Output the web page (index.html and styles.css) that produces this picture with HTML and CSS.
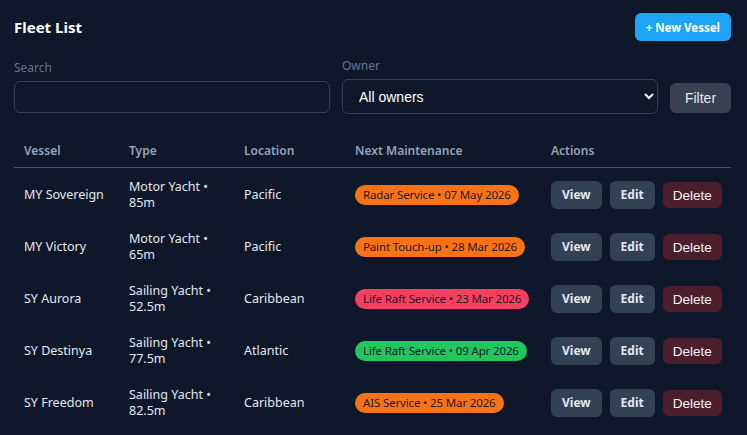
FILE: index.html
```html
<!DOCTYPE html>
<html lang="en">
<head>
  <meta charset="UTF-8" />
  <meta name="viewport" content="width=device-width, initial-scale=1.0" />
  <title>Fleet List</title>
  <link rel="stylesheet" href="styles.css">
</head>
<body>
  <main class="page">
    <header class="page-head">
      <h1>Fleet List</h1>
      <a class="btn-primary" href="#">+ New Vessel</a>
    </header>

    <form class="filters">
      <div class="field">
        <label for="search">Search</label>
        <input type="text" id="search" class="search-input" />
      </div>
      <div class="field">
        <label for="owner" class="owner-label">Owner</label>
        <select id="owner" class="owner-select">
          <option>All owners</option>
        </select>
      </div>
      <button type="submit" class="btn-filter">Filter</button>
    </form>

    <table class="fleet">
      <thead>
        <tr>
          <th class="col-vessel">Vessel</th>
          <th class="col-type">Type</th>
          <th class="col-loc">Location</th>
          <th class="col-maint">Next Maintenance</th>
          <th>Actions</th>
        </tr>
      </thead>
      <tbody>
        <tr>
          <td>MY Sovereign</td>
          <td>Motor Yacht • 85m</td>
          <td>Pacific</td>
          <td><span class="badge badge-orange">Radar Service • 07 May 2026</span></td>
          <td class="actions"><a class="btn-sm" href="#">View</a><a class="btn-sm" href="#">Edit</a><button class="btn-delete">Delete</button></td>
        </tr>
        <tr>
          <td>MY Victory</td>
          <td>Motor Yacht • 65m</td>
          <td>Pacific</td>
          <td><span class="badge badge-orange">Paint Touch-up • 28 Mar 2026</span></td>
          <td class="actions"><a class="btn-sm" href="#">View</a><a class="btn-sm" href="#">Edit</a><button class="btn-delete">Delete</button></td>
        </tr>
        <tr>
          <td>SY Aurora</td>
          <td>Sailing Yacht • 52.5m</td>
          <td>Caribbean</td>
          <td><span class="badge badge-red">Life Raft Service • 23 Mar 2026</span></td>
          <td class="actions"><a class="btn-sm" href="#">View</a><a class="btn-sm" href="#">Edit</a><button class="btn-delete">Delete</button></td>
        </tr>
        <tr>
          <td>SY Destinya</td>
          <td>Sailing Yacht • 77.5m</td>
          <td>Atlantic</td>
          <td><span class="badge badge-green">Life Raft Service • 09 Apr 2026</span></td>
          <td class="actions"><a class="btn-sm" href="#">View</a><a class="btn-sm" href="#">Edit</a><button class="btn-delete">Delete</button></td>
        </tr>
        <tr>
          <td>SY Freedom</td>
          <td>Sailing Yacht • 82.5m</td>
          <td>Caribbean</td>
          <td><span class="badge badge-orange">AIS Service • 25 Mar 2026</span></td>
          <td class="actions"><a class="btn-sm" href="#">View</a><a class="btn-sm" href="#">Edit</a><button class="btn-delete">Delete</button></td>
        </tr>
      </tbody>
    </table>
  </main>
</body>
</html>
```

FILE: styles.css
```css
body {
  margin: 0;
  font-family: "Segoe UI", "Noto Sans", sans-serif;
  background-color: #0f172a;
  color: #e2e8f0;
  font-size: 12.5px;
}

.page {
  padding: 13px 16px 0 14px;
}

.page-head {
  display: flex;
  justify-content: space-between;
  align-items: center;
  height: 28px;
}

.page-head h1 {
  margin: 0;
  font-size: 15px;
  font-weight: 700;
  color: #fff;
}

.btn-primary {
  display: inline-flex;
  align-items: center;
  height: 28px;
  padding: 0 11px;
  background-color: #1ea5f7;
  color: #fff;
  font-size: 11.5px;
  font-weight: 700;
  text-decoration: none;
  border-radius: 6px;
}

.filters {
  display: flex;
  align-items: flex-end;
  gap: 12px;
  margin-top: 17px;
}

.field {
  flex: 1;
  display: flex;
  flex-direction: column;
}

.field label {
  font-size: 12px;
  color: #64748b;
  margin-bottom: 5px;
  line-height: 16px;
}

.search-input {
  height: 32px;
  box-sizing: border-box;
  background-color: #0f172a;
  border: 1px solid #334155;
  border-radius: 6px;
  color: #e2e8f0;
  padding: 0 10px;
  margin-bottom: 1px;
}

.owner-select {
  height: 35px;
  box-sizing: border-box;
  background-color: #0f172a;
  border: 1px solid #334155;
  border-radius: 6px;
  color: #fff;
  padding: 0 12px;
  font-family: "Liberation Sans", Arial, sans-serif;
  font-size: 14px;
  color-scheme: dark;
}

.btn-filter {
  height: 30px;
  width: 61px;
  margin-bottom: 1px;
  background-color: #374151;
  color: #e2e8f0;
  border: none;
  border-radius: 6px;
  font-family: "Liberation Sans", Arial, sans-serif;
  font-size: 14px;
}

.fleet {
  width: 100%;
  margin-top: 17px;
  border-collapse: collapse;
  table-layout: fixed;
}

.fleet th {
  text-align: left;
  font-size: 12px;
  font-weight: 600;
  color: #94a3b8;
  padding: 12px 10px 8px;
  line-height: 16px;
  border-bottom: 1px solid #475569;
}

.col-vessel { width: 85px; }
.col-type { width: 95px; }
.col-loc { width: 91px; }
.col-maint { width: 176px; }

.fleet td {
  padding: 11px 10px 9px;
  line-height: 16px;
  vertical-align: middle;
}

.badge {
  display: inline-block;
  padding: 2px 8px;
  border-radius: 999px;
  font-size: 11.5px;
  letter-spacing: -0.15px;
  line-height: 16px;
  color: #1e1b2e;
  white-space: nowrap;
}

.badge-orange { background-color: #f97316; }
.badge-red { background-color: #f43f5e; }
.badge-green { background-color: #22c55e; }

.actions {
  white-space: nowrap;
}

.btn-sm {
  display: inline-block;
  vertical-align: middle;
  height: 28px;
  line-height: 28px;
  padding: 0 11px;
  margin-right: 8px;
  background-color: #334155;
  color: #e2e8f0;
  font-weight: 700;
  font-size: 12px;
  text-decoration: none;
  border-radius: 6px;
}

.btn-delete {
  vertical-align: middle;
  height: 26px;
  padding: 0 10px;
  background-color: #4c1d2a;
  color: #f1f5f9;
  border: none;
  border-radius: 6px;
  font-family: "Liberation Sans", Arial, sans-serif;
  font-size: 13.5px;
}
```
